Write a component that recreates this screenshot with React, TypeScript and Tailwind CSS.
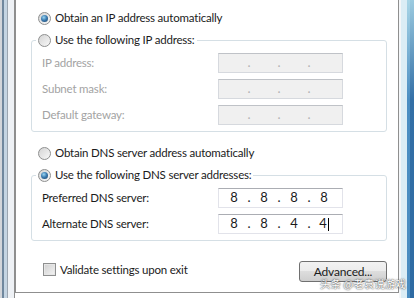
const font = { fontFamily: 'Lato, "Noto Sans", sans-serif' };

function Radio({ checked }: { checked?: boolean }) {
  return (
    <span className="flex size-[13px] shrink-0 items-center justify-center rounded-full border border-[#8e8f8f] bg-[linear-gradient(135deg,#d4d4d4,#f8f8f8)]">
      {checked && (
        <span className="size-[7px] rounded-full bg-[radial-gradient(circle_at_40%_35%,#9ad6f2_0%,#3d7db2_45%,#163d63_100%)]" />
      )}
    </span>
  );
}

function RadioRow({ checked, label }: { checked?: boolean; label: string }) {
  return (
    <div className="flex h-[16px] items-center gap-[4px] text-[#1b1b1b]">
      <Radio checked={checked} />
      <span>{label}</span>
    </div>
  );
}

function IpBox({ parts, disabled, caret }: { parts: string[]; disabled?: boolean; caret?: boolean }) {
  return (
    <div
      className={
        disabled
          ? "flex h-[20px] w-[125px] items-center border border-[#d6d9de] border-t-[#bfc2c7] bg-[#f0f0f0] pl-[3px] text-[13px] tracking-normal text-[#b4b4b4]"
          : "flex h-[20px] w-[125px] items-center border border-[#e2e3ea] border-t-[#abadb3] bg-white pl-[3px] text-[13px] tracking-normal text-[#1b1b1b]"
      }
    >
      {parts.map((p, i) => (
        <div key={i} className="flex items-center">
          <span className="flex w-[24px] items-center justify-center">
            {p}
            {caret && i === 3 && <span className="ml-[1px] inline-block h-[13px] w-px bg-black" />}
          </span>
          {i < 3 && <span className="w-[6px] text-center">.</span>}
        </div>
      ))}
    </div>
  );
}

function Row({ label, children, disabled }: { label: string; children: React.ReactNode; disabled?: boolean }) {
  return (
    <div className="flex h-[20px] items-center justify-between">
      <span className={disabled ? "text-[#a3a3a3]" : "text-[#1b1b1b]"}>{label}</span>
      {children}
    </div>
  );
}

export default function App() {
  return (
    <div
      className="relative flex h-[298px] w-[414px] overflow-hidden bg-white text-[11.5px] tracking-[-0.2px]"
      style={font}
    >
      <div className="h-full w-[15px] shrink-0 bg-[linear-gradient(to_right,#d2d5da_0px,#d2d5da_2px,#6f879e_2px,#6f879e_4px,#c4d4e2_4px,#c4d4e2_7px,#9ba5b0_7px,#9ba5b0_8px,#eef1f5_8px,#eef1f5_14px,#8e8e8e_14px)]" />

      <div className="h-[293px] w-[384px] shrink-0 border-x border-b border-[#8f8f8f] pl-[15px] pr-[11px] pt-[10px]">
        <div className="ml-[7px]">
          <RadioRow checked label="Obtain an IP address automatically" />
        </div>

        <fieldset className="mt-[6px] min-w-0 rounded-[3px] border border-[#d5dfe5]">
          <legend className="ml-[4px] px-[2px]">
            <RadioRow label="Use the following IP address:" />
          </legend>
          <div className="flex flex-col gap-[6px] pb-[6px] pl-[10px] pr-[43px] pt-[5px]">
            <Row label="IP address:" disabled>
              <IpBox disabled parts={["", "", "", ""]} />
            </Row>
            <Row label="Subnet mask:" disabled>
              <IpBox disabled parts={["", "", "", ""]} />
            </Row>
            <Row label="Default gateway:" disabled>
              <IpBox disabled parts={["", "", "", ""]} />
            </Row>
          </div>
        </fieldset>

        <div className="ml-[7px] mt-[13px]">
          <RadioRow label="Obtain DNS server address automatically" />
        </div>

        <fieldset className="mt-[6px] min-w-0 rounded-[3px] border border-[#d5dfe5]">
          <legend className="ml-[4px] px-[2px]">
            <RadioRow checked label="Use the following DNS server addresses:" />
          </legend>
          <div className="flex flex-col gap-[6px] pb-[6px] pl-[10px] pr-[43px] pt-[5px]">
            <Row label="Preferred DNS server:">
              <IpBox parts={["8", "8", "8", "8"]} />
            </Row>
            <Row label="Alternate DNS server:">
              <IpBox parts={["8", "8", "4", "4"]} caret />
            </Row>
          </div>
        </fieldset>

        <div className="mt-[20px] flex items-start justify-between">
          <div className="flex items-center gap-[4px] pl-[12px] text-[#1b1b1b]">
            <span className="size-[13px] border border-[#8e8f8f] bg-[linear-gradient(135deg,#cfcfcf,#f4f4f4)] shadow-[inset_0_0_0_1px_#e6e6e6]" />
            <span>Validate settings upon exit</span>
          </div>
          <button className="h-[21px] w-[88px] rounded-[3px] border border-[#707070] bg-[linear-gradient(to_bottom,#f2f2f2_0%,#ebebeb_50%,#dddddd_50%,#cfcfcf_100%)] text-[12px] text-[#1b1b1b]">
            Advanced...
          </button>
        </div>
      </div>

      <div className="flex h-full w-[15px] shrink-0">
        <div className="w-[2px] bg-[#f4f6f8]" />
        <div className="w-[6px] bg-[#dbedf5]" />
        <div className="w-[3px] bg-[linear-gradient(to_bottom,#a9d5e6_0px,#4b8ec2_100px,#4a8cc0_100%)]" />
        <div className="flex-1 bg-[linear-gradient(to_bottom,#9ccbe0_0px,#336fa6_100px,#2e6ba3_100%)]" />
      </div>

      <div
        className="absolute left-[320px] top-[276px] text-[10.5px] tracking-normal text-white [text-shadow:0_0_2px_#555,0_0_1px_#555]"
        style={{ fontFamily: '"Noto Sans CJK SC", "Noto Sans", sans-serif' }}
      >
        头条 @老袁说游戏
      </div>
    </div>
  );
}
